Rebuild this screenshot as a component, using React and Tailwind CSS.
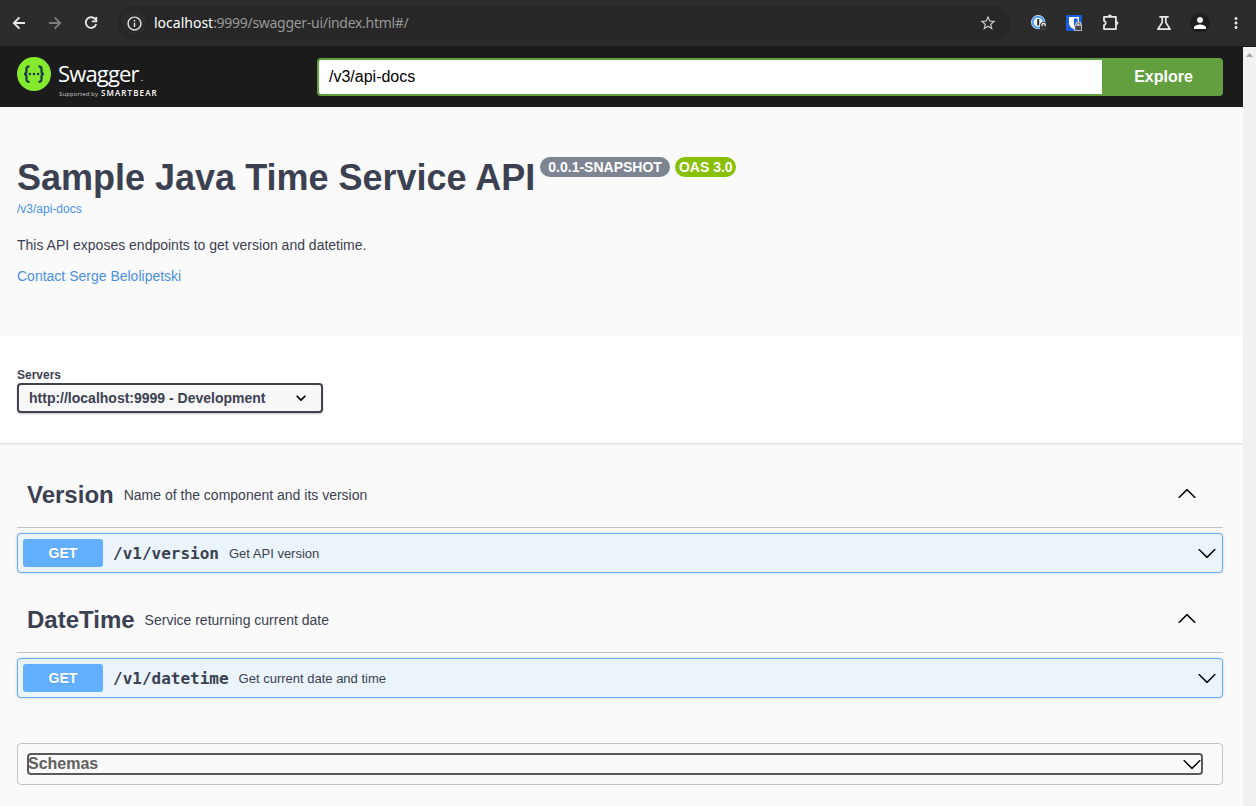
import React from "react";
import { MdInfoOutline, MdStarBorder, MdPerson, MdMoreVert } from "react-icons/md";

const DOWN =
  "M17.418 6.109c.272-.268.709-.268.979 0s.271.701 0 .969l-7.908 7.83c-.27.268-.707.268-.979 0l-7.908-7.83c-.27-.268-.27-.701 0-.969.271-.268.709-.268.979 0L10 13.25z";
const UP =
  "M17.418 14.908c.272.268.709.268.979 0s.271-.701 0-.969l-7.908-7.83c-.27-.268-.707-.268-.979 0l-7.908 7.83c-.27.268-.27.701 0 .969.271.268.709.268.979 0L10 7.767z";

function Arrow({ up, className = "" }) {
  return (
    <svg viewBox="0 0 20 20" className={`size-5 shrink-0 fill-black ${className}`}>
      <path d={up ? UP : DOWN} />
    </svg>
  );
}

function NavIcon({ d, className = "" }) {
  return (
    <svg viewBox="0 0 18 18" className={`size-[18px] shrink-0 fill-none stroke-current stroke-[1.800] ${className}`}>
      <path d={d} />
    </svg>
  );
}

function PasswordIcon() {
  return (
    <svg viewBox="0 0 16 16" className="size-4">
      <circle cx="7.200" cy="7.200" r="7.100" fill="#e9f1f8" />
      <circle cx="7.200" cy="7.200" r="5.500" fill="#fbfcfd" stroke="#4a9df0" strokeWidth="2" />
      <rect x="6.200" y="4" width="2" height="6.600" rx="0.600" fill="#1c2733" />
      <path d="M9 16V10.500a3.500 3.500 0 0 1 7 0V16z" fill="#2c2c2c" />
      <path d="M10.900 11.500v-1.300a1.700 1.700 0 0 1 3.400 0v1.300" fill="none" stroke="#f0f0f0" strokeWidth="1.300" />
      <rect x="10" y="11.300" width="5.200" height="4" rx="0.600" fill="#3a3a3a" />
    </svg>
  );
}

function ShieldIcon() {
  return (
    <svg viewBox="0 0 16 16" className="size-4">
      <rect width="16" height="16" rx="1" fill="#175ddc" />
      <path d="M3 2h10v6c0 3.200-2.700 5.200-5 6.200C5.700 13.200 3 11.200 3 8z" fill="#fff" />
      <path d="M8 3.500h3.600V8c0 2.100-1.800 3.600-3.600 4.500z" fill="#175ddc" />
      <path d="M8.200 15.800v-5.600h1.100V9a3.200 3.200 0 0 1 6.200 0v1.200h.5v5.600z" fill="#dedede" />
      <rect x="9.200" y="10.800" width="6" height="4.300" fill="#4a4a4a" />
      <path d="M10.900 10.400V9.200a1.500 1.500 0 0 1 3 0v1.200" fill="none" stroke="#4a4a4a" strokeWidth="1" />
    </svg>
  );
}

function PuzzleIcon() {
  return (
    <svg viewBox="0 0 18 18" className="size-[18px]" fill="none" stroke="#e8e8e8" strokeWidth="1.800" strokeLinejoin="round">
      <path d="M2 2.900h11.900v12.200H2v-3.900a2.200 2.200 0 0 0 0-4.300z" />
      <path d="M5.900 2.400a2 2 0 0 1 4 0zM14.400 7a2 2 0 0 1 0 4z" fill="#e8e8e8" stroke="none" />
    </svg>
  );
}

function FlaskIcon() {
  return (
    <svg viewBox="0 0 16 16" className="size-4" fill="none" stroke="#e8e8e8" strokeWidth="1.700" strokeLinejoin="round">
      <path d="M3.300 1.900h9.400M6.200 2v5.400L1.900 14.200h12.200L9.800 7.400V2" />
    </svg>
  );
}

function BrowserBar() {
  return (
    <div className="flex h-[46px] items-center bg-[#2c2c2c] text-[#e8e8e8]">
      <NavIcon className="ml-[10px]" d="M15 9H4M9.400 3.400L3.800 9l5.600 5.600" />
      <NavIcon className="ml-[18px] text-[#7d7d7d]" d="M3 9h11M8.600 3.400L14.200 9l-5.600 5.600" />
      <NavIcon className="ml-[18px]" d="M13.500 5.600A5.300 5.300 0 1 0 14.200 10M14.300 3v4.300H9.900" />
      <div className="ml-[17px] flex h-[34px] w-[894px] items-center rounded-full bg-[#272727]">
        <span className="ml-[5px] flex size-6 items-center justify-center rounded-full bg-[#2c2c2c]">
          <MdInfoOutline className="size-[17px]" />
        </span>
        <span className="-mt-0.5 ml-[8px] font-['Noto_Sans',sans-serif] text-[14px] tracking-[-0.290px] whitespace-nowrap text-[#999999]">
          <span className="tracking-[0px] text-white">localhost</span>:9999/swagger-ui/index.html#/
        </span>
        <MdStarBorder className="mr-[14px] ml-auto size-[18px] text-[#c9c9c9]" />
      </div>
      <div className="ml-[20px] flex items-center">
        <PasswordIcon />
        <span className="ml-[19px] flex"><ShieldIcon /></span>
        <span className="ml-5 flex"><PuzzleIcon /></span>
        <span className="ml-[36px] flex"><FlaskIcon /></span>
        <span className="ml-[18px] flex size-5 items-center justify-center rounded-full bg-[#1d1f1f]">
          <MdPerson className="size-[18px] text-white" />
        </span>
        <MdMoreVert className="ml-[17px] size-[18px]" />
      </div>
    </div>
  );
}

function Logo() {
  return (
    <div className="flex w-[300px] text-white">
      <svg viewBox="0 0 34 34" className="mt-[11px] size-[34px] shrink-0">
        <circle cx="17" cy="17" r="17" fill="#85ea2d" />
        <g fill="none" stroke="#173647" strokeWidth="2.200">
          <path d="M12.500 9.300c-2.600 0-3 .8-3 2.600v2.300c0 1.800-.6 2.700-2.400 2.800 1.800.1 2.400 1 2.400 2.800v2.500c0 1.800.4 2.600 3 2.600" />
          <path d="M21.500 9.300c2.600 0 3 .8 3 2.600v2.300c0 1.800.6 2.700 2.400 2.800-1.800.1-2.400 1-2.400 2.800v2.500c0 1.800-.4 2.600-3 2.600" />
        </g>
        <g fill="#173647">
          <circle cx="12.900" cy="17" r="1.250" />
          <circle cx="17" cy="17" r="1.250" />
          <circle cx="21.100" cy="17" r="1.250" />
        </g>
      </svg>
      <div className="ml-[7px] pt-[14px] font-['Open_Sans',sans-serif]">
        <div className="flex h-[27px] items-end whitespace-nowrap">
          <span className="w-[83px] text-[22px] leading-[27px] tracking-[-0.850px]">Swagger</span>
          <span className="mb-[6px] h-px w-[2px] bg-[#999999]" />
        </div>
        <div className="mt-px flex items-baseline pl-px leading-[9px] whitespace-nowrap">
          <span className="text-[6px] tracking-[0.100px] text-[#cccccc]">Supported by</span>
          <span className="ml-[3px] text-[8px] font-semibold tracking-[1.100px]">SMARTBEAR</span>
        </div>
      </div>
    </div>
  );
}

function TopBar() {
  return (
    <div className="flex h-[61px] bg-[#1b1b1b] pl-[17px]">
      <Logo />
      <div className="mt-3 flex h-[38px] w-[906px]">
        <div className="flex flex-1 items-center rounded-l-[4px] border-2 border-r-0 border-[#62a03f] bg-white px-[10px] text-base text-black">
          /v3/api-docs
        </div>
        <div className="flex w-[121px] items-center justify-center rounded-r-[4px] bg-[#62a03f] pl-0.5 text-base font-bold text-white">
          Explore
        </div>
      </div>
    </div>
  );
}

function Tag({ name, description, path, summary }) {
  return (
    <section>
      <div className="flex h-[66px] items-center border-b border-[#3b4151]/30 pr-[26px] pl-[10px]">
        <h3 className="text-2xl font-bold">{name}</h3>
        <span className="ml-[10px] flex-1 text-sm">{description}</span>
        <Arrow up className="-mt-1" />
      </div>
      <div className="mt-[5px] flex h-10 items-center rounded-[4px] border border-[#61affe] bg-[#ebf3fb] pr-[5px] pl-[5px] shadow-[0_0_3px_rgba(0,0,0,0.190)]">
        <span className="flex h-7 w-20 items-center justify-center rounded-[3px] bg-[#61affe] text-sm font-bold text-white [text-shadow:0_1px_0_rgba(0,0,0,0.100)]">
          GET
        </span>
        <span className="mt-0.5 ml-[10px] font-['DejaVu_Sans_Mono',monospace] text-base font-bold">{path}</span>
        <span className="mt-px ml-[10px] flex-1 text-[13px]">{summary}</span>
        <Arrow />
      </div>
    </section>
  );
}

export default function App() {
  return (
    <div className="h-[806px] w-[1256px] overflow-hidden bg-[#fafafa] font-['Liberation_Sans',Arial,sans-serif] text-[#3b4151]">
      <BrowserBar />
      <div className="flex h-[760px]">
        <main className="w-[1243px]">
          <TopBar />
          <header className="h-[228px] px-[17px] pt-[49px]">
            <div className="flex h-[42px]">
              <h1 className="text-4xl leading-[44px] font-bold whitespace-nowrap">Sample Java Time Service API</h1>
              <span className="mt-px ml-[5px] flex h-5 items-center rounded-full bg-[#7d8492] px-2 text-sm font-bold text-white">0.0.1-SNAPSHOT</span>
              <span className="mt-px ml-[5px] flex h-5 w-[61px] items-center rounded-full bg-[#89bf04] pl-1 text-sm font-bold whitespace-nowrap text-white">OAS 3.0</span>
            </div>
            <a className="mt-[3px] block text-xs text-[#4990e2]">/v3/api-docs</a>
            <p className="mt-[18px] text-sm">This API exposes endpoints to get version and datetime.</p>
            <a className="mt-[11px] block text-sm text-[#4990e2]">Contact Serge Belolipetski</a>
          </header>
          <div className="h-[108px] bg-white px-[17px] pt-[32px] shadow-[0_1px_2px_0_rgba(0,0,0,0.150)]">
            <div className="h-4 text-xs leading-4 font-bold">Servers</div>
            <div className="flex h-[30px] w-[306px] items-center justify-between rounded-[4px] border-2 border-[#41444e] bg-[#f7f7f7] px-[10px] text-sm font-bold shadow-[0_1px_2px_0_rgba(0,0,0,0.250)]">
              http://localhost:9999 - Development
              <svg viewBox="0 0 20 20" className="size-5 fill-black stroke-black stroke-[0.300]">
                <path d="M13.418 7.859a.695.695 0 0 1 .978 0 .68.68 0 0 1 0 .969l-3.908 3.830a.697.697 0 0 1-.979 0l-3.908-3.830a.68.68 0 0 1 0-.969.695.695 0 0 1 .978 0L10 11z" />
              </svg>
            </div>
          </div>
          <div className="pt-[19px] pr-[20px] pl-[17px]">
            <Tag name="Version" description="Name of the component and its version" path="/v1/version" summary="Get API version" />
            <div className="h-[14px]" />
            <Tag name="DateTime" description="Service returning current date" path="/v1/datetime" summary="Get current date and time" />
            <div className="mt-[45px] h-[42px] rounded-[4px] border border-[#3b4151]/30 pt-[9px] pr-[19px] pl-[9px]">
              <div className="flex h-[22px] items-center rounded-[4px] border-2 border-[#5a5a5a] text-base font-bold text-[#606060]">
                <span className="-ml-px flex-1">Schemas</span>
                <Arrow className="-mr-px" />
              </div>
            </div>
          </div>
        </main>
        <div className="w-[13px] bg-[#1b1b1b] pt-px">
          <aside className="flex h-full justify-center bg-[#f1f1f1] pt-[6px]">
            <svg viewBox="0 0 7 4" className="h-1 w-[7px] fill-[#a3a3a3]">
              <path d="M3.500 0L7 4H0z" />
            </svg>
          </aside>
        </div>
      </div>
    </div>
  );
}
